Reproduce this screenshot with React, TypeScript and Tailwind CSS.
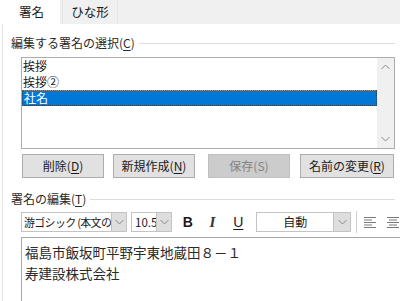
import React from "react";

const F = { fontFamily: '"Noto Sans CJK JP", "Noto Sans", sans-serif' } as React.CSSProperties;

function Chevron({ up = false, className = "" }: { up?: boolean; className?: string }) {
  return (
    <svg width="9" height="6" viewBox="0 0 9 6" className={className}>
      <path
        d={up ? "M0.5 5 L4.5 1 L8.5 5" : "M0.5 1 L4.5 5 L8.5 1"}
        fill="none"
        stroke="#8a8a8a"
        strokeWidth="1"
      />
    </svg>
  );
}

function Btn({ label, k, w, disabled = false }: { label: string; k: string; w: string; disabled?: boolean }) {
  return (
    <div
      className={`${w} h-[24px] flex items-center justify-center border text-[12px] leading-none ${
        disabled ? "bg-[#cccccc] border-[#bfbfbf] text-[#838383]" : "bg-[#e1e1e1] border-[#adadad] text-[#1a1a1a]"
      }`}
    >
      <span>
        {label}(
        <span className={disabled ? "" : "underline underline-offset-2"}>{k}</span>)
      </span>
    </div>
  );
}

function AlignIcon({ center = false }: { center?: boolean }) {
  const rows = [12, 8, 12, 8, 12];
  return (
    <svg width="13" height="12" viewBox="0 0 13 12">
      {rows.map((w, i) => (
        <rect key={i} x={center ? (12 - w) / 2 : 0} y={1 + i * 2.5} width={w} height="1" fill="#7a7a7a" />
      ))}
    </svg>
  );
}

export default function App() {
  return (
    <div className="w-[400px] h-[301px] bg-white overflow-hidden relative text-[#1a1a1a]" style={F}>
      {/* Tab bar */}
      <div className="h-[24px] bg-[#f0f0f0] flex">
        <div className="w-[60px] h-[24px] bg-white flex items-center justify-center text-[12.5px] leading-none pt-[1px] pl-[3px]">
          署名
        </div>
        <div className="ml-[2px] w-[56px] h-[24px] bg-[#f0f0f0] border-x border-[#e6e6e6] flex items-center justify-center text-[12.5px] leading-none pt-[1px]">
          ひな形
        </div>
      </div>

      {/* Content */}
      <div className="ml-[2px] border-l border-[#e3e3e3] h-[277px] flex flex-col">
        {/* Group 1 header */}
        <div className="mt-[11px] flex items-center pl-[8px] pr-[5px] h-[16px]">
          <span className="text-[12px] leading-none whitespace-nowrap text-[#2a2a2a]">
            編集する署名の選択(<span className="underline underline-offset-2">C</span>)
          </span>
          <div className="flex-1 h-px bg-[#dcdcdc] ml-[4px]" />
        </div>

        {/* Listbox */}
        <div className="mt-[6px] ml-[18px] w-[374px] h-[92px] border border-[#acacac] flex">
          <div className="flex-1 flex flex-col text-[12px]">
            <div className="h-[16px] leading-[16px] pl-[1px]">挨拶</div>
            <div className="h-[16px] leading-[16px] pl-[1px]">挨拶②</div>
            <div className="h-[16px] leading-[14px] pl-[1px] bg-[#0078d7] text-white border border-dotted border-[#3a3a3a] border-t-[#d08040]">
              社名
            </div>
          </div>
          <div className="w-[17px] bg-[#f0f0f0] flex flex-col items-center justify-between pt-[6px] pb-[6px]">
            <Chevron up />
            <Chevron />
          </div>
        </div>

        {/* Buttons */}
        <div className="mt-[5px] flex pl-[19px]">
          <Btn label="削除" k="D" w="w-[82px]" />
          <div className="ml-[9px]">
            <Btn label="新規作成" k="N" w="w-[82px]" />
          </div>
          <div className="ml-[13px]">
            <Btn label="保存" k="S" w="w-[82px]" disabled />
          </div>
          <div className="ml-[10px]">
            <Btn label="名前の変更" k="R" w="w-[94px]" />
          </div>
        </div>

        {/* Group 2 header */}
        <div className="mt-[13px] flex items-center pl-[8px] pr-[5px] h-[16px]">
          <span className="text-[12px] leading-none whitespace-nowrap text-[#2a2a2a]">
            署名の編集(<span className="underline underline-offset-2">T</span>)
          </span>
          <div className="flex-1 h-px bg-[#dcdcdc] ml-[4px]" />
        </div>

        {/* Toolbar */}
        <div className="mt-[5px] flex items-center pl-[18px] h-[20px]">
          <div className="w-[106px] h-[20px] border border-[#c3c3c3] flex">
            <div className="flex-1 text-[11px] tracking-[-0.7px] leading-[18px] pl-[2px] overflow-hidden whitespace-nowrap">
              游ゴシック (本文の
            </div>
            <div className="w-[15px] h-full bg-[#dedede] border-l border-[#c3c3c3] flex items-center justify-center">
              <Chevron />
            </div>
          </div>
          <div className="ml-[4px] w-[41px] h-[20px] border border-[#c3c3c3] flex">
            <div className="flex-1 text-[11.5px] leading-[18px] pl-[3px] overflow-hidden whitespace-nowrap">10.5</div>
            <div className="w-[15px] h-full bg-[#dedede] border-l border-[#c3c3c3] flex items-center justify-center">
              <Chevron />
            </div>
          </div>
          <div className="ml-[10px] w-[12px] text-center text-[14px] font-bold leading-none" style={{ fontFamily: '"Liberation Sans", sans-serif' }}>
            B
          </div>
          <div className="ml-[14px] w-[10px] text-center text-[15px] italic font-bold leading-none text-[#333]" style={{ fontFamily: '"Liberation Serif", serif' }}>
            I
          </div>
          <div className="ml-[16px] w-[10px] text-center text-[14px] leading-none underline underline-offset-2" style={{ fontFamily: '"Liberation Sans", sans-serif' }}>
            U
          </div>
          <div className="ml-[13px] w-[98px] h-[20px] border border-[#c3c3c3] flex">
            <div className="flex-1 text-[12px] leading-[18px] text-center">自動</div>
            <div className="w-[17px] h-full bg-[#dedede] border-l border-[#c3c3c3] flex items-center justify-center">
              <Chevron />
            </div>
          </div>
          <div className="ml-[5px] w-px h-[22px] bg-[#d0d0d0]" />
          <div className="ml-[7px]">
            <AlignIcon />
          </div>
          <div className="ml-[10px]">
            <AlignIcon center />
          </div>
        </div>

        {/* Editor */}
        <div className="mt-[5px] ml-[18px] w-[400px] flex-1 border border-[#a8a8a8] border-r-0 border-b-0 pt-[4px] pl-[3px] text-[13.5px] leading-[21px] text-[#2a2a2a]">
          <div className="whitespace-nowrap">福島市飯坂町平野宇東地蔵田８－１</div>
          <div className="whitespace-nowrap">寿建設株式会社</div>
        </div>
      </div>
    </div>
  );
}
